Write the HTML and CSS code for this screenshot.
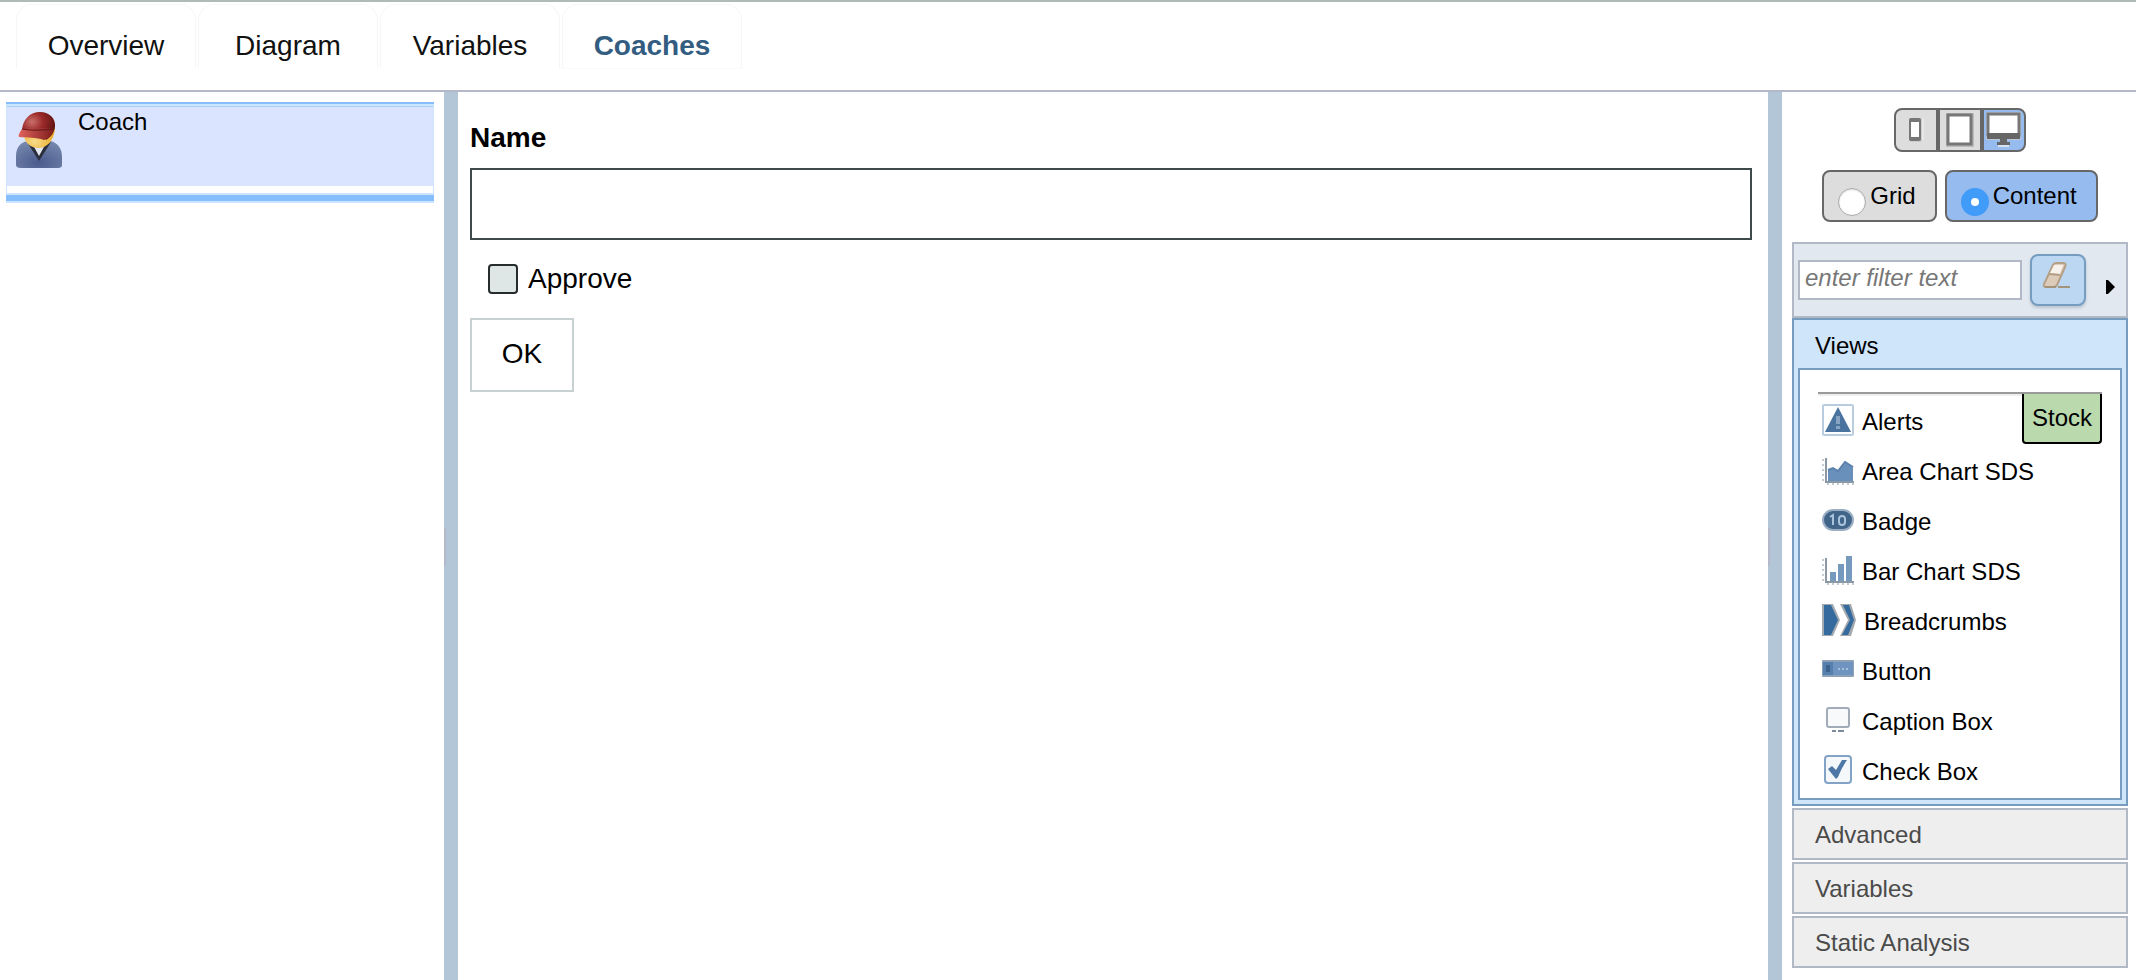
FILE: index.html
```html
<!DOCTYPE html>
<html lang="en">
<head>
<meta charset="utf-8">
<title>Coaches</title>
<link rel="stylesheet" href="styles.css">
</head>
<body>
<header class="topbar">
  <nav class="tabs">
    <a class="tab" href="#overview">Overview</a>
    <a class="tab" href="#diagram">Diagram</a>
    <a class="tab" href="#variables">Variables</a>
    <a class="tab tab-active" href="#coaches" aria-current="page">Coaches</a>
  </nav>
</header>
<div class="workspace">
  <aside class="coach-list">
    <div class="coach-frame">
      <div class="coach-body">
        <a class="coach" href="#coach">
          <svg class="avatar" viewBox="0 0 46 58" aria-hidden="true">
            <defs>
              <radialGradient id="cap" cx=".3" cy=".35" r=".75"><stop offset="0" stop-color="#c9706b"/><stop offset=".45" stop-color="#9c2b2b"/><stop offset="1" stop-color="#5a1010"/></radialGradient>
              <linearGradient id="brim" x1="0" x2="1"><stop offset="0" stop-color="#e0625c"/><stop offset="1" stop-color="#7d1c1c"/></linearGradient>
              <radialGradient id="face" cx=".35" cy=".7" r=".7"><stop offset="0" stop-color="#f8dc8c"/><stop offset="1" stop-color="#e8a71d"/></radialGradient>
              <radialGradient id="coat" cx=".5" cy=".8" r=".8"><stop offset="0" stop-color="#4a5a8e"/><stop offset="1" stop-color="#7688ac"/></radialGradient>
            </defs>
            <path d="M0 54V45C0 36 5 31 12 30H34C41 31 46 37 46 46V54Q46 57 42 57H5Q0 57 0 54Z" fill="url(#coat)"/>
            <path d="M11 31L23 50L35 31L29 34H17Z" fill="#2b2f3c"/>
            <path d="M17 34L23 45L29 34Z" fill="#e4e8f2"/>
            <path d="M8 25C9 33 16 37 22 37C31 37 38 30 39 17L28 16Z" fill="url(#face)"/>
            <path d="M6 19C7 8 14 1 24 1C34 1 40 8 39 16C38 22 34 27 30 29L26 20Z" fill="url(#cap)"/>
            <path d="M6 18C17 18 29 16 38 18C37 24 32 28 28 29C20 26 11 27 3 26C2 24 4 21 6 18Z" fill="url(#brim)"/>
            <path d="M6 18C17 20 28 19 38 18" fill="none" stroke="#5f1515"/>
          </svg>
          <span class="coach-name">Coach</span>
        </a>
      </div>
      <div class="drop-line"></div>
    </div>
  </aside>
  <div class="splitter"><span class="grip"></span></div>
  <main class="canvas">
    <label class="field-label" for="name">Name</label>
    <input class="field" id="name" type="text">
    <label class="check"><input type="checkbox">Approve</label>
    <button class="ok" type="button">OK</button>
  </main>
  <div class="splitter"><span class="grip"></span></div>
  <aside class="palette">
    <div class="devices" role="group" aria-label="Screen size">
      <button class="device" type="button" aria-label="Phone">
        <svg class="device-icon" viewBox="0 0 36 36" aria-hidden="true"><rect x="11" y="6" width="13" height="24" rx="2" fill="#ccc"/><rect x="11" y="6" width="12" height="23" rx="2" fill="#777"/><rect x="13" y="10" width="8" height="15" fill="#fff"/><path d="M25 7V28" stroke="#f4f4f4"/></svg>
      </button>
      <button class="device" type="button" aria-label="Tablet">
        <svg class="device-icon" viewBox="0 0 36 36" aria-hidden="true"><rect x="4" y="1" width="28" height="34" rx="1" fill="#bbb"/><rect x="6" y="3" width="23" height="29" fill="#fff" stroke="#777" stroke-width="3"/></svg>
      </button>
      <button class="device device-active" type="button" aria-label="Desktop">
        <svg class="device-icon" viewBox="0 0 36 36" aria-hidden="true"><rect x="0" y="0" width="35" height="28" rx="1" fill="#bcc6d4"/><rect x="2" y="2" width="31" height="21" fill="#fff" stroke="#777" stroke-width="3"/><path d="M1 21H34V27H21V30H24V33H11V30H14V27H1Z" fill="#666"/><path d="M12 34H23" stroke="#d7e2f1" stroke-width="2"/></svg>
      </button>
    </div>
    <div class="modes">
      <label class="mode"><input type="radio" name="mode">Grid</label>
      <label class="mode mode-active"><input type="radio" name="mode" checked>Content</label>
    </div>
    <div class="filter">
      <input class="filter-input" type="text" placeholder="enter filter text" aria-label="Filter">
      <button class="erase" type="button" aria-label="Clear filter">
        <svg class="erase-icon" viewBox="0 0 32 32" aria-hidden="true"><path d="M11 3Q12 1 14 1H21Q25 1 23 5L15 23Q14 25 12 25H4Q1 25 2 22Z" fill="#dccbb9" stroke="#b3a085" stroke-width="2"/><path d="M12 3H21L18 12L8 11Z" fill="#f7f2ec"/><path d="M7 12L18 13" stroke="#b39e84" stroke-width="2"/><path d="M3 25H14M16 25H28" stroke="#a3947c" stroke-width="2"/></svg>
      </button>
      <button class="expand" type="button" aria-label="Expand"><svg class="expand-icon" viewBox="0 0 10 14" aria-hidden="true"><path d="M0 0H2L9 7L2 14H0Z"/></svg></button>
    </div>
    <section class="views">
      <button class="views-title" type="button" aria-expanded="true">Views</button>
      <div class="views-body">
        <span class="stock">Stock</span>
        <ul class="items">
          <li class="item"><svg class="icon" viewBox="0 0 32 32" aria-hidden="true"><rect x="1" y="1" width="30" height="30" rx="1" fill="#fff" stroke="#b9cde1" stroke-width="2"/><path d="M16 3L29 28H3Z" fill="#4a739f"/><path d="M16 12V20M16 22V25" stroke="#87a5c3" stroke-width="4"/></svg>Alerts</li>
          <li class="item"><svg class="icon" viewBox="0 0 32 32" aria-hidden="true"><path d="M6 16L11 14L16 17L23 7L31 13V28H6Z" fill="#6990ba"/><path d="M6 16L11 14L16 17L23 8L31 13" fill="none" stroke="#5b82ad" stroke-width="2"/><path d="M4 4V28H32" fill="none" stroke="#8b99a7" stroke-width="2"/><path d="M1 5V28M5 30H32" stroke="#c3cbd3" stroke-width="2" stroke-dasharray="2 3" fill="none"/></svg>Area Chart SDS</li>
          <li class="item"><svg class="icon" viewBox="0 0 32 32" aria-hidden="true"><rect x="1" y="6" width="30" height="20" rx="10" fill="#416489" stroke="#9bafc4" stroke-width="2"/><path d="M8 13L11 11V21" fill="none" stroke="#a9c3dd" stroke-width="2"/><rect x="17" y="12" width="6" height="9" rx="3" fill="none" stroke="#a9c3dd" stroke-width="2"/></svg>Badge</li>
          <li class="item"><svg class="icon" viewBox="0 0 32 32" aria-hidden="true"><path d="M8 18H14V27H8ZM16 10H22V27H16ZM24 2H30V27H24Z" fill="#7699be"/><path d="M4 4V28H32" fill="none" stroke="#8b99a7" stroke-width="2"/><path d="M1 5V28M5 30H32" stroke="#c3cbd3" stroke-width="2" stroke-dasharray="2 3" fill="none"/></svg>Bar Chart SDS</li>
          <li class="item"><svg class="icon icon-wide" viewBox="0 0 34 32" aria-hidden="true"><path d="M0 0H11L18 16L11 32H0Z" fill="#a3aab1"/><path d="M2 1H9L16 16L9 31H2Z" fill="#356a9f"/><path d="M18 0H29L34 16L29 32H18L26 16Z" fill="#a3a8ad"/><path d="M21 1H27L32 16L26 31H20L28 16Z" fill="#356a9f"/></svg>Breadcrumbs</li>
          <li class="item"><svg class="icon" viewBox="0 0 32 32" aria-hidden="true"><rect x="0" y="6" width="32" height="17" rx="1" fill="#8fa1b6"/><rect x="1" y="8" width="30" height="13" fill="#6f94bf"/><rect x="1" y="8" width="10" height="13" fill="#5580ae"/><rect x="4" y="11" width="4" height="7" fill="#3d628b"/><path d="M16 15H27" stroke="#a5c0dc" stroke-width="2" stroke-dasharray="2 2"/></svg>Button</li>
          <li class="item"><svg class="icon" viewBox="0 0 32 32" aria-hidden="true"><rect x="5" y="4" width="22" height="19" rx="2" fill="#f7f9fb" stroke="#a2acb9" stroke-width="2"/><path d="M10 27H14M16 27H22" stroke="#7d8c9c" stroke-width="2"/></svg>Caption Box</li>
          <li class="item"><svg class="icon" viewBox="0 0 32 32" aria-hidden="true"><rect x="3" y="2" width="26" height="27" rx="3" fill="#f5f8fb" stroke="#83a3c6" stroke-width="2"/><path d="M6 15L10 12L14 16L20 6H25Q20 13 16 23L14 25Z" fill="#4d77a5"/></svg>Check Box</li>
        </ul>
      </div>
    </section>
    <button class="section" type="button">Advanced</button>
    <button class="section" type="button">Variables</button>
    <button class="section" type="button">Static Analysis</button>
  </aside>
</div>
</body>
</html>
```
FILE: styles.css
```css
*, *::before, *::after { box-sizing: border-box; }
body {
  margin: 0;
  min-height: 100vh;
  display: flex;
  flex-direction: column;
  background: #fff;
  color: #000;
  font: 24px/28px "Liberation Sans", Arial, sans-serif;
}
button, input { font: inherit; color: inherit; }
a { color: inherit; text-decoration: none; }
button { cursor: pointer; }

.topbar {
  border-top: 2px solid #aebbb9;
  border-bottom: 2px solid #b4b8c8;
  padding: 2px 16px 21px;
}
.tabs { display: flex; gap: 2px; }
.tab {
  width: 180px;
  padding: 25px 0 6px;
  border: 1px solid #f6f6f6;
  border-bottom-color: transparent;
  border-radius: 16px 16px 0 0;
  text-align: center;
  font-size: 28px;
  line-height: 32px;
  color: #111;
}
.tab-active { color: #335c81; font-weight: bold; border-bottom-color: #fafafa; }

.workspace {
  flex: 1;
  display: grid;
  grid-template-columns: 444px 14px minmax(0, 1fr) 14px 354px;
}
.splitter { display: flex; align-items: center; padding-top: 22px; background: #b2c6d7; }
.grip { width: 2px; height: 38px; background: #b4b8c8; }

.coach-list { padding: 10px 10px 0 6px; }
.coach-frame { border-top: 2px solid #86bdfe; }
.coach-body {
  border: 2px solid #cbe5ff;
  border-width: 2px 1px;
  padding-bottom: 7px;
}
.coach {
  display: flex;
  align-items: flex-start;
  gap: 16px;
  min-height: 80px;
  padding: 4px 9px 0;
  border-top: 1px solid #a9d0fb;
  background: #dbe4fe;
}
.avatar { width: 46px; height: 58px; }
.coach-name { line-height: 22px; }
.drop-line { height: 8px; background: #86bdfe; border-bottom: 2px solid #cbe5ff; }

.canvas { display: flex; flex-direction: column; align-items: flex-start; padding: 30px 16px 0 12px; font-size: 28px; line-height: 32px; }
.field-label { font-weight: bold; }
.field { width: 100%; height: 72px; margin-top: 14px; padding: 0 12px; border: 2px solid #3f4a4b; border-radius: 0; background: #fff; }
.check { display: flex; align-items: center; gap: 10px; margin: 23px 18px 0; }
.check input {
  appearance: none;
  width: 30px;
  height: 30px;
  margin: 0;
  border: 2px solid #262b2b;
  border-radius: 4px;
  background: #dfe7e6;
}
.ok { min-width: 104px; height: 74px; margin-top: 23px; padding: 0 12px 2px; border: 2px solid #c8d1d1; background: #fff; }

.palette { padding: 16px 8px 12px 10px; }
.devices, .modes { display: flex; justify-content: center; }
.device { width: 44px; height: 44px; padding: 2px; border: 2px solid #676767; background: #ddd; }
.device:first-child { border-radius: 8px 0 0 8px; }
.device:last-child { border-radius: 0 8px 8px 0; }
.device-active { background: #95bbef; }
.device-icon { display: block; width: 36px; height: 36px; }
.modes { gap: 8px; margin: 18px 0 20px; }
.mode {
  display: flex;
  align-items: flex-start;
  gap: 4px;
  height: 52px;
  padding: 10px 19px 0 14px;
  border: 2px solid #676767;
  border-radius: 8px;
  background: #ddd;
}
.mode-active { background: #95bbef; }
.mode input {
  appearance: none;
  width: 28px;
  height: 28px;
  margin: 6px 0 0;
  border: 1px solid #a9a9a9;
  border-radius: 50%;
  background: #fff;
  box-shadow: inset 0 1px 2px #ddd;
}
.mode input:checked { border: 10px solid #419bf9; box-shadow: none; }

.filter { display: flex; align-items: center; gap: 8px; height: 76px; padding: 0 10px 0 4px; border: 2px solid #b1b8c6; background: #e1e8ef; }
.filter-input { flex: 1; min-width: 0; height: 40px; padding: 0 5px 4px; border: 2px solid #b1b8c6; background: #fff; font-style: italic; }
.filter-input::placeholder { color: #777; opacity: 1; }
.erase { display: flex; justify-content: center; width: 56px; height: 52px; padding: 6px 0; border: 2px solid #769dc0; border-radius: 8px; background: #bcd7f2; box-shadow: 0 2px 3px #b9c4d0; }
.erase-icon { width: 32px; height: 32px; }
.expand { display: flex; margin-left: 12px; padding: 14px 0 0; border: 0; background: none; }
.expand-icon { width: 10px; height: 14px; }

.views { padding: 0 4px 4px; border: 2px solid #769dc0; background: #cfe5f9; }
.views-title { display: block; width: 100%; height: 48px; padding: 4px 17px 0; border: 0; background: none; text-align: left; }
.views-body { position: relative; padding: 22px 18px 10px; border: 2px solid #769dc0; background: #fff; }
.items { margin: 0; padding: 8px 4px 0; border-top: 2px solid #9a9a9a; list-style: none; box-shadow: inset 0 2px #eee; }
.item { display: flex; align-items: flex-start; gap: 8px; height: 50px; line-height: 36px; padding-top: 2px; }
.items .item:last-child { height: 36px; }
.icon { width: 32px; height: 32px; flex: none; }
.icon-wide { width: 34px; }
.stock { position: absolute; top: 24px; right: 18px; width: 80px; height: 50px; padding-top: 10px; border: 2px solid #000; border-top: 0; border-radius: 0 0 4px 4px; background: #bad9ad; text-align: center; }

.section { display: block; width: 100%; height: 52px; margin-top: 2px; padding: 2px 21px 0; border: 2px solid #b1b8c6; background: #eee; color: #4a4a4a; text-align: left; }
```
